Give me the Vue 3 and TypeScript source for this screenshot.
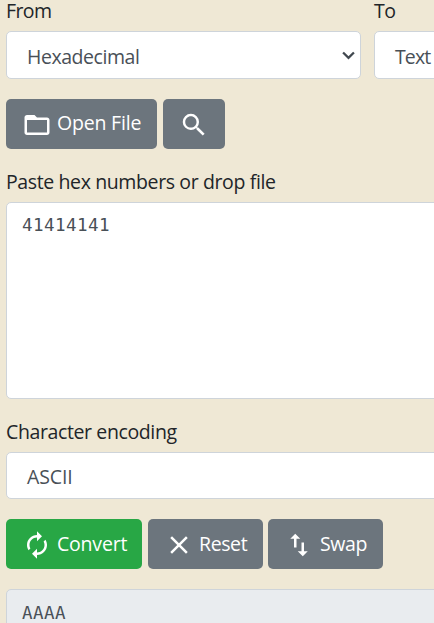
<script setup lang="ts">
import { ref } from 'vue'

const source = ref('Hexadecimal')
const target = ref('Text')
const encoding = ref('ASCII')
const input = ref('41414141')
const output = ref('AAAA')

const icons = {
  folder: 'M20 6h-8l-2-2H4c-1.1 0-1.99.9-1.99 2L2 18c0 1.1.9 2 2 2h16c1.1 0 2-.9 2-2V8c0-1.1-.9-2-2-2zm0 12H4V8h16v10z',
  search: 'M15.5 14h-.79l-.28-.27A6.471 6.471 0 0 0 16 9.5 6.5 6.5 0 1 0 9.5 16c1.61 0 3.09-.59 4.23-1.57l.27.28v.79l5 4.99L20.49 19l-4.99-5zm-6 0C7.01 14 5 11.99 5 9.5S7.01 5 9.5 5 14 7.01 14 9.5 11.99 14 9.5 14z',
  renew: 'M12 6v3l4-4-4-4v3c-4.42 0-8 3.58-8 8 0 1.57.46 3.03 1.24 4.26L6.7 14.8A5.87 5.87 0 0 1 6 12c0-3.31 2.69-6 6-6zm6.76 1.74L17.3 9.2c.44.84.7 1.79.7 2.8 0 3.31-2.69 6-6 6v-3l-4 4 4 4v-3c4.42 0 8-3.58 8-8 0-1.57-.46-3.03-1.24-4.26z',
  close: 'M19 6.41L17.59 5 12 10.59 6.41 5 5 6.41 10.59 12 5 17.59 6.41 19 12 13.41 17.59 19 19 17.59 13.41 12z',
  swap: 'M16 17.01V10h-2v7.01h-3L15 21l4-3.99h-3zM9 3L5 6.99h3V14h2V6.99h3L9 3z',
}
</script>

<template>
  <main class="page">
    <div class="row">
      <section class="column">
        <div class="label"><span class="t-from">From</span></div>
        <div class="control select">
          <span class="t-hex">{{ source }}</span>
          <svg class="chevron" viewBox="0 0 12 8"><path d="M1 1.2 6 6.2 11 1.2" /></svg>
        </div>
      </section>
      <section class="column">
        <div class="label"><span class="t-to">To</span></div>
        <div class="control select"><span class="t-text">{{ target }}</span></div>
      </section>
    </div>

    <div class="buttons files">
      <button class="btn open"><svg class="icon" viewBox="0 0 24 24"><path :d="icons.folder" /></svg><span class="t-open">Open File</span></button>
      <button class="btn find" aria-label="Search"><svg class="icon" viewBox="0 0 24 24"><path :d="icons.search" /></svg></button>
    </div>

    <div class="label spaced"><span class="t-paste">Paste hex numbers or drop file</span></div>
    <div class="control area"><span class="mono">{{ input }}</span></div>

    <div class="label spaced"><span class="t-enc">Character encoding</span></div>
    <div class="control select wide"><span class="t-ascii">{{ encoding }}</span></div>

    <div class="buttons actions">
      <button class="btn convert"><svg class="icon" viewBox="0 0 24 24"><path :d="icons.renew" /></svg><span class="t-convert">Convert</span></button>
      <button class="btn reset"><svg class="icon" viewBox="0 0 24 24"><path :d="icons.close" /></svg><span class="t-reset">Reset</span></button>
      <button class="btn swap"><svg class="icon" viewBox="0 0 24 24"><path :d="icons.swap" /></svg><span class="t-swap">Swap</span></button>
    </div>

    <div class="control area result"><span class="mono">{{ output }}</span></div>
  </main>
</template>

<style>
body {
  background: #efe8d5;
  overflow: hidden;
}
</style>

<style scoped>
* {
  box-sizing: border-box;
}
.page {
  height: 623px;
  padding-left: 6px;
  overflow: hidden;
  background: #efe8d5;
  color: #212529;
  font-family: "Open Sans", "Noto Sans", sans-serif;
  font-size: 19.5px;
  font-weight: 400;
  line-height: 30px;
  letter-spacing: -0.38px;
  white-space: nowrap;
}
.row {
  display: flex;
  gap: 13px;
}
.column {
  width: 355px;
  flex: none;
}
.label {
  height: 31px;
  line-height: 22px;
}
.spaced {
  height: 53px;
  padding-top: 22px;
}
.control {
  border: 1px solid #ced4da;
  border-radius: 5px;
  background: #fff;
  color: #495057;
}
.select {
  display: flex;
  align-items: center;
  justify-content: space-between;
  height: 48px;
  padding: 3px 5px 0 20px;
}
.chevron {
  width: 13px;
  height: 9px;
  margin-top: -2px;
  fill: none;
  stroke: #41484f;
  stroke-width: 2.1;
}
.buttons {
  display: flex;
  height: 50px;
}
.files {
  gap: 6px;
  margin-top: 20px;
}
.btn {
  display: flex;
  align-items: center;
  height: 50px;
  padding: 0 0 1px 16px;
  border: 0;
  border-radius: 5px;
  background: #6c757d;
  color: #fff;
  font: inherit;
  letter-spacing: -0.2px;
}
.icon {
  flex: none;
  width: 30px;
  height: 30px;
  margin: 3px 5px 0 0;
  fill: currentColor;
}
.open {
  width: 151px;
  padding-bottom: 2px;
}
.open .icon {
  margin-top: 4px;
}
.find {
  width: 62px;
}
.area {
  height: 197px;
  margin-right: -10px;
  padding: 7px 15px;
  font-family: "DejaVu Sans Mono", monospace;
  font-size: 17.5px;
}
.wide {
  height: 47px;
  margin-right: -10px;
}
.actions {
  margin-top: 20px;
}
.convert {
  width: 136px;
  margin-right: 6px;
  background: #28a745;
}
.reset {
  width: 115px;
  margin-right: 5px;
}
.swap {
  width: 115px;
}
.result {
  height: 100px;
  margin-top: 20px;
  padding-top: 8px;
  background: #e9ecef;
}
.mono {
  letter-spacing: 0.46px;
}
.t-from {
  letter-spacing: -0.6px;
}
.t-hex {
  letter-spacing: -0.45px;
}
.t-text {
  letter-spacing: -0.9px;
}
.t-ascii {
  letter-spacing: -0.1px;
}
.t-reset {
  letter-spacing: -0.4px;
}
.t-swap {
  margin-left: 1px;
  letter-spacing: -0.4px;
}
</style>
